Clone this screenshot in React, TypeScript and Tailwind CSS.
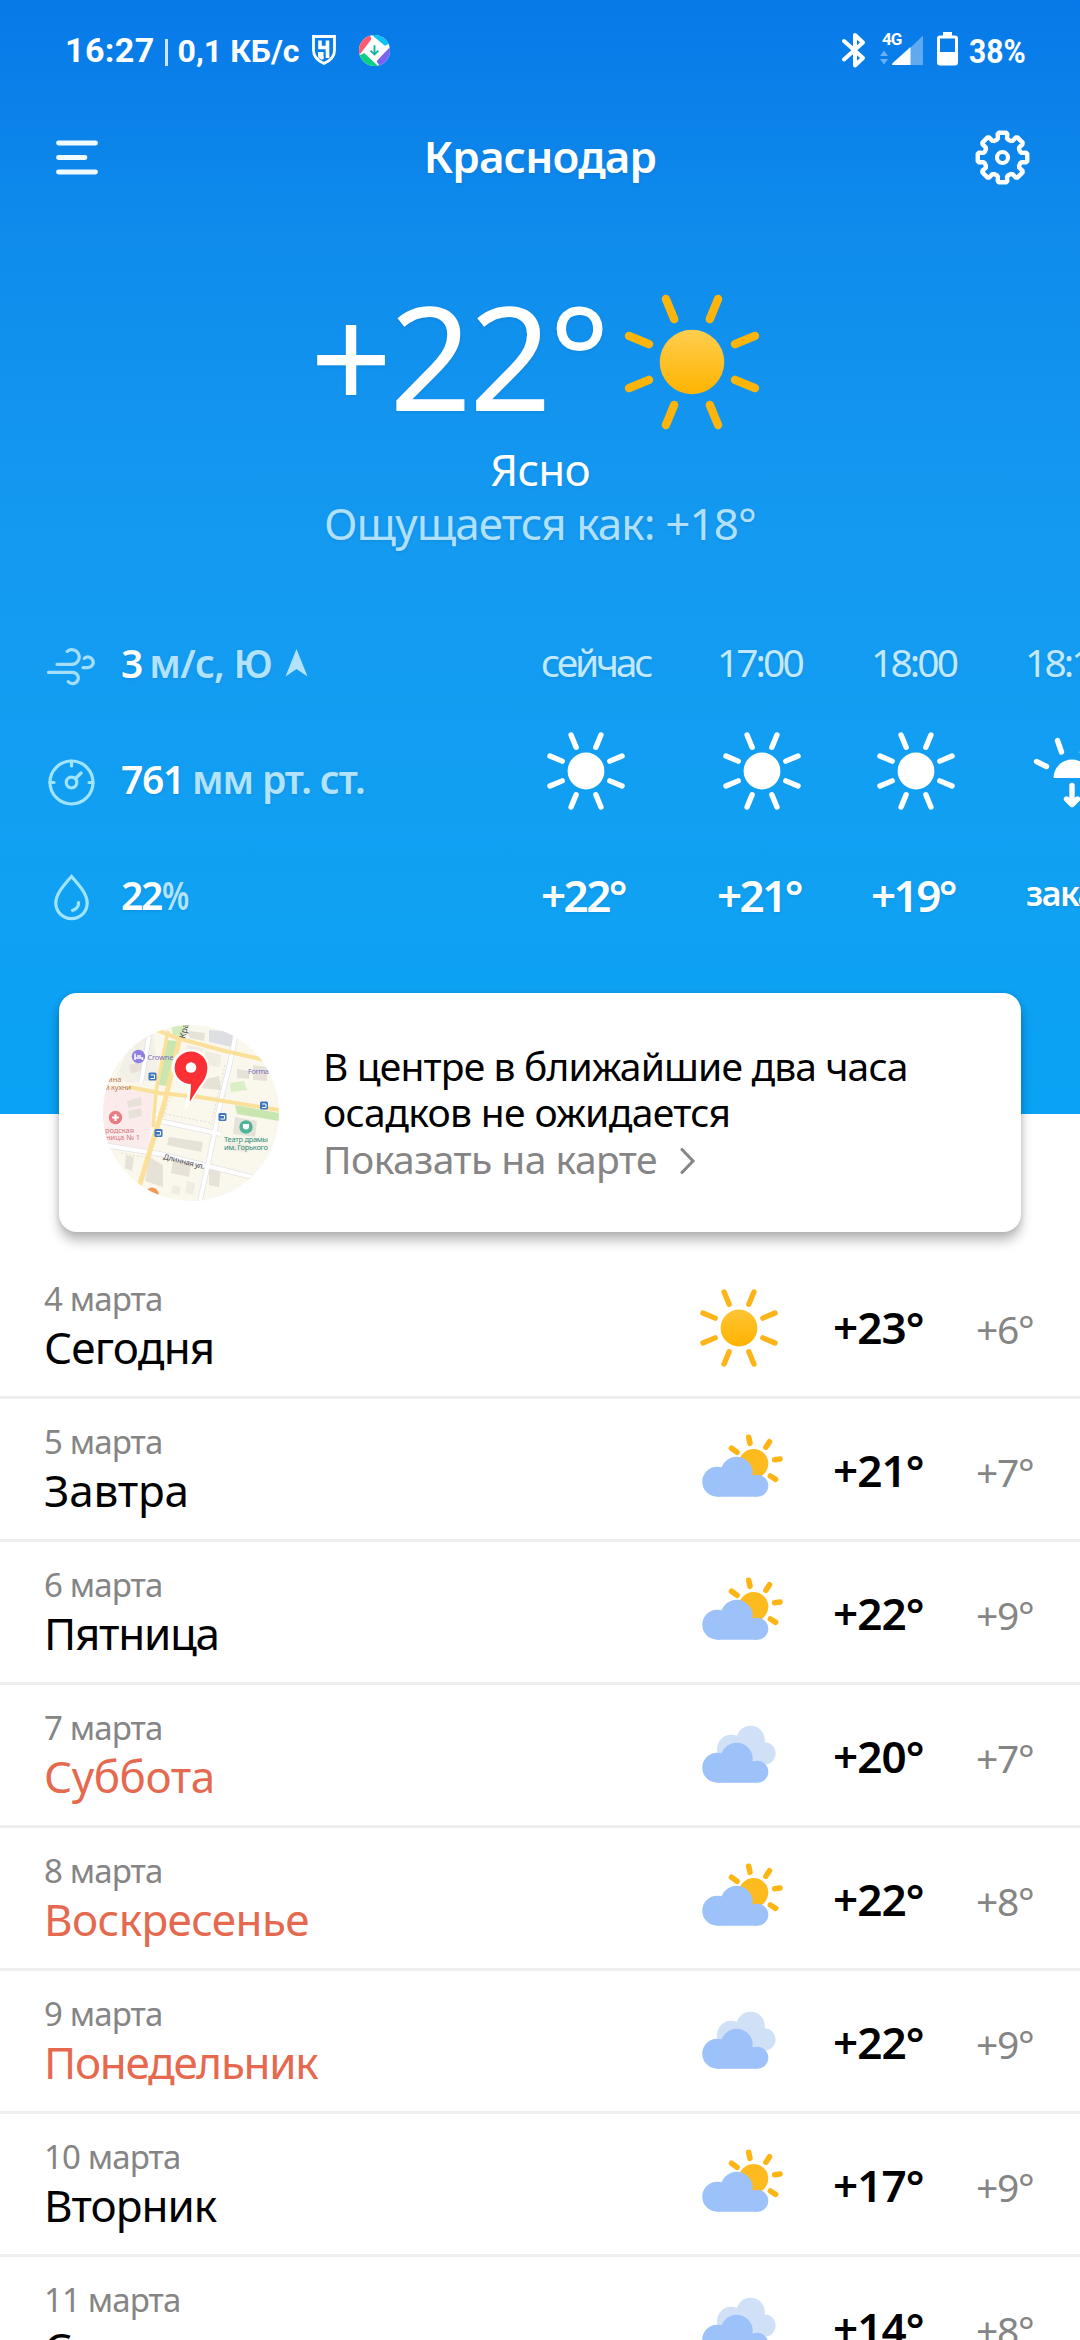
import React from "react";

const days = [
  { date: "4 марта", name: "Сегодня", icon: "sun", max: "+23°", min: "+6°", tracking: "tracking-[-0.8px]" },
  { date: "5 марта", name: "Завтра", icon: "partly", max: "+21°", min: "+7°", tracking: "tracking-[-0.2px]" },
  { date: "6 марта", name: "Пятница", icon: "partly", max: "+22°", min: "+9°", tracking: "tracking-[-1.3px]" },
  { date: "7 марта", name: "Суббота", icon: "cloudy", max: "+20°", min: "+7°", tracking: "tracking-[-0.4px]", off: true },
  { date: "8 марта", name: "Воскресенье", icon: "partly", max: "+22°", min: "+8°", tracking: "tracking-[-0.6px]", off: true },
  { date: "9 марта", name: "Понедельник", icon: "cloudy", max: "+22°", min: "+9°", tracking: "tracking-[-1.3px]", off: true },
  { date: "10 марта", name: "Вторник", icon: "partly", max: "+17°", min: "+9°", tracking: "tracking-[-1px]" },
  { date: "11 марта", name: "Среда", icon: "cloudy", max: "+14°", min: "+8°", tracking: "tracking-[-0.4px]" },
];

const hours = [
  { time: "сейчас", temp: "+22°", width: "w-[176px]", tracking: "tracking-[-3.2px]" },
  { time: "17:00", temp: "+21°", width: "w-[154px]", tracking: "tracking-[-3px]" },
  { time: "18:00", temp: "+19°", width: "w-[154px]", tracking: "tracking-[-2.9px]" },
];

const rayAngles = [22.5, 67.5, 112.5, 157.5, 202.5, 247.5, 292.5, 337.5];

function BigSun() {
  return (
    <svg className="size-[144px]" viewBox="0 0 144 144">
      <defs>
        <linearGradient id="bigSun" x1="0" y1="0" x2="0" y2="1">
          <stop offset="0" stopColor="#ffce4f" />
          <stop offset="1" stopColor="#ffb300" />
        </linearGradient>
      </defs>
      <circle cx="72" cy="72" r="32.3" fill="url(#bigSun)" />
      {rayAngles.map((a) => (
        <line key={a} x1="72" y1="25.5" x2="72" y2="3.8" stroke="#fdb50b" strokeWidth="8.4" strokeLinecap="round" transform={`rotate(${a} 72 72)`} />
      ))}
    </svg>
  );
}

function SmallSun({ color, fill }: any) {
  return (
    <svg className="size-[90px]" viewBox="0 0 90 90">
      <defs>
        <linearGradient id="smallSun" x1="0" y1="0" x2="0" y2="1">
          <stop offset="0" stopColor="#ffc535" />
          <stop offset="1" stopColor="#ffb300" />
        </linearGradient>
      </defs>
      <circle cx="45" cy="45" r="18.4" fill={fill} />
      {rayAngles.map((a) => (
        <line key={a} x1="45" y1="19.2" x2="45" y2="6" stroke={color} strokeWidth="5.4" strokeLinecap="round" transform={`rotate(${a} 45 45)`} />
      ))}
    </svg>
  );
}

function Cloud() {
  return (
    <g fill="#9cc2f9">
      <circle cx="23.3" cy="55.7" r="15" />
      <circle cx="42.7" cy="46.7" r="16" />
      <circle cx="63.3" cy="59.7" r="11" />
      <path d="M23.3 46h32l8 8v16.7h-40z" />
    </g>
  );
}

function PartlyCloudy() {
  return (
    <svg className="size-[90px]" viewBox="0 0 90 90">
      <circle cx="59.6" cy="37.6" r="14.7" fill="#febb1f" />
      <path
        d="M37.5 22.3l5.5 4M54.7 11.3l1.3 6M75.5 15.8l-3.6 5.4M86 33l-5.4.8M76.4 50l5.2 3.3"
        stroke="#fdb515"
        strokeWidth="5.6"
        strokeLinecap="round"
        fill="none"
      />
      <Cloud />
    </svg>
  );
}

function Cloudy() {
  return (
    <svg className="size-[90px]" viewBox="0 0 90 90">
      <g fill="#d0e1f7">
        <circle cx="37.2" cy="37" r="14.2" />
        <circle cx="56.6" cy="28" r="14.3" />
        <circle cx="70.3" cy="41.5" r="11.3" />
        <path d="M37 30h25l8 6v16.8H37z" />
      </g>
      <Cloud />
    </svg>
  );
}

function DayIcon({ name }: any) {
  if (name === "sun") return <SmallSun color="#fbb419" fill="url(#smallSun)" />;
  if (name === "partly") return <PartlyCloudy />;
  return <Cloudy />;
}

// outline of a cog with eight teeth
function gearPath() {
  const pts: string[] = [];
  for (let i = 0; i < 8; i++) {
    [[-18, 18.6], [-13.5, 19.6], [-11.5, 24], [-8.5, 25], [8.5, 25], [11.5, 24], [13.5, 19.6], [18, 18.6]].forEach(([da, r]) => {
      const a = ((i * 45 + da - 90) * Math.PI) / 180;
      pts.push(`${(27.5 + r * Math.cos(a)).toFixed(2)} ${(27.5 + r * Math.sin(a)).toFixed(2)}`);
    });
  }
  return "M" + pts.join("L") + "Z";
}

function StatusBar() {
  return (
    <div className="flex h-[100px] items-center pl-[65px] pr-[54px] font-['Roboto',sans-serif] font-bold text-white">
      <span className="text-[34px] tracking-[0.4px]">16:27</span>
      <span className="ml-[10px] mt-[4px] h-[27px] w-[3px] bg-white/80" />
      <span className="ml-[10px] mt-[1px] text-[32px]">0,1 КБ/с</span>
      <svg className="ml-[12px] h-[32px] w-[26px]" viewBox="0 0 26 32">
        <path d="M2.5 2.5h21v14c0 6-4 10-10.5 13C6.5 26.5 2.5 22.5 2.5 16.5z" fill="none" stroke="#fff" strokeWidth="2.8" />
        {/* angular mark inside the shield */}
        <path d="M9 6.5v7h7.500M16.5 6.500V24M9 18.500v4l3 2" fill="none" stroke="#fff" strokeWidth="3.6" />
        <path d="M7 18h5.500v7.500L7 22z" fill="#fff" />
      </svg>
      <svg className="ml-[22px] size-[31px]" viewBox="0 0 30 30">
        <clipPath id="badge"><circle cx="15" cy="15" r="15" /></clipPath>
        <g clipPath="url(#badge)">
          <rect width="30" height="30" fill="#fff" />
          <path d="M0 0h10.5l1.500 4L1.500 18 0 19z" fill="#ff5a6e" />
          <path d="M12.5 0L25 10.500l4-2 1-8.500z" fill="#0cc2f5" />
          <path d="M30 11.500L17 25.5l3 4.500h10z" fill="#7b61f0" />
          <path d="M5 17.5L18.500 30H0v-10z" fill="#0ccf83" />
        </g>
        <path d="M15 10v8.500M11.2 15.2l3.800 3.700 3.800-3.700" stroke="#0fb5a0" strokeWidth="1.8" fill="none" />
      </svg>
      <div className="ml-auto flex items-center">
        <svg className="h-[38px] w-[26px]" viewBox="0 0 26 38">
          <path d="M3 10l19 17-8 7.500V4l8 7.500L3 28.500" fill="none" stroke="#fff" strokeWidth="4" strokeLinecap="round" strokeLinejoin="round" />
        </svg>
        <svg className="ml-[13px] h-[38px] w-[44px]" viewBox="0 0 44 38">
          <text x="2" y="14" fontSize="17" letterSpacing="-1" fill="#fff" fontFamily="Roboto" fontWeight="700">4G</text>
          <path d="M0 25l4-5.500 4 5.500zM0 28l4 5.500 4-5.500z" fill="#fff" opacity=".4" />
          <path d="M43 4.500V34H12.500z" fill="#fff" opacity=".35" />
          <path d="M30.500 16v18h-17q-2.500 0-.8-2z" fill="#fff" />
        </svg>
        <svg className="ml-[12px] h-[38px] w-[23px]" viewBox="0 0 23 38">
          <path d="M7 1h9v4H7z" fill="#fff" />
          <rect x="2.5" y="6" width="18" height="27" rx="1.5" fill="none" stroke="#fff" strokeWidth="3" />
          <path d="M2 21h19v12H2z" fill="#fff" />
        </svg>
        <span className="ml-[10px] mt-[2px] w-[57px] origin-left scale-x-[.885] text-[34px]">38%</span>
      </div>
    </div>
  );
}

function TopBar() {
  return (
    <div className="flex h-[114px] items-center justify-between px-[50px] text-white">
      <svg className="size-[55px]" viewBox="0 0 55 55">
        <path d="M8.500 13h37M8.500 27.500h26.500M8.500 42h37" stroke="#eefcff" strokeWidth="4.800" strokeLinecap="round" />
      </svg>
      <h1 className="pb-[2px] text-[44px] leading-[54px] font-semibold tracking-[-0.85px]">Краснодар</h1>
      <svg className="size-[55px]" viewBox="0 0 55 55">
        <path d={gearPath()} fill="none" stroke="#fff" strokeWidth="4.400" strokeLinejoin="round" />
        <circle cx="27.500" cy="27.500" r="5.500" fill="none" stroke="#fff" strokeWidth="4.200" />
      </svg>
    </div>
  );
}

function Details() {
  return (
    <div className="w-[540px] pl-[47px] text-[39px] leading-[54px] font-semibold text-[#b3e3fc]">
      <div className="flex h-[116px] items-center">
        <svg className="mt-[6px] size-[49px]" viewBox="0 0 49 49">
          <path
            d="M10 22.300h14.500a7.300 7.300 0 1 0-4.300-12.900M36 25.600h5a5.300 5.300 0 1 0-3.700-9.200M1.500 30.300h23.800a5.700 5.700 0 1 1-4 9.500"
            fill="none"
            stroke="#a5defb"
            strokeWidth="3.200"
            strokeLinecap="round"
          />
        </svg>
        <span className="ml-[25px] text-white">3</span>
        <span className="ml-[6px] tracking-[-0.8px]">м/с, Ю</span>
        <svg className="ml-[13px] h-[28px] w-[23px]" viewBox="0 0 23 28">
          <path d="M11.500 0L22.500 27.500l-11-7.500L.5 27.500z" fill="#b3e3fc" />
        </svg>
      </div>
      <div className="flex h-[116px] items-center">
        <svg className="mt-[6px] size-[49px]" viewBox="0 0 49 49" fill="none" stroke="#a0e4fd">
          <circle cx="24.500" cy="24.500" r="21.500" strokeWidth="3.200" />
          <circle cx="24.500" cy="24.500" r="5.300" strokeWidth="3.200" />
          <path d="M28.500 20.500l5.500-5.500M24.500 3v5M3 24.500h4M42 24.500h4" strokeWidth="3.200" strokeLinecap="round" />
        </svg>
        <span className="ml-[25px] tracking-[-1.3px] text-white">761</span>
        <span className="ml-[8px] tracking-[-1.15px]">мм рт. ст.</span>
      </div>
      <div className="flex h-[116px] items-center">
        <svg className="mt-[4px] size-[49px]" viewBox="0 0 49 49" fill="none" stroke="#a0e4fd" strokeWidth="3.200" strokeLinecap="round">
          <path d="M24.500 3.500C17 12 8.800 21 8.800 30a15.700 15.700 0 0 0 31.400 0c0-9-8.200-18-15.700-26.500z" />
          <path d="M31.500 29.500a7.500 7.500 0 0 1-6 7.800" />
        </svg>
        <span className="ml-[25px] tracking-[-2.3px] text-white">22</span>
        <span className="ml-[1px] inline-block origin-left scale-x-[.8]">%</span>
      </div>
    </div>
  );
}

function Hourly() {
  return (
    <div className="flex flex-1 overflow-hidden">
      {hours.map((h) => (
        <div key={h.time} className={`${h.width} shrink-0`}>
          <p className={`${h.tracking} pl-[1px] pt-[30px] text-[39px] leading-[54px] text-[#c1e8fd]`}>{h.time}</p>
          <div className="mt-[37px] h-[90px] pl-[1px]">
            <SmallSun color="#fff" fill="#fff" />
          </div>
          <p className="mt-[47px] pl-[1px] text-[44px] leading-[64px] font-semibold tracking-[-2.6px] text-white">{h.temp}</p>
        </div>
      ))}
      <div className="w-[154px] shrink-0">
        <p className="pl-[1px] pt-[30px] text-[39px] leading-[54px] tracking-[-2.9px] text-[#c1e8fd]">18:14</p>
        <div className="mt-[37px] h-[90px] pl-[3px]">
          <svg className="size-[90px]" viewBox="0 0 90 90">
            <path d="M26.500 52a18.500 18.500 0 0 1 37 0z" fill="#fff" />
            <path
              d="M30.500 14.500l4 11.500M59.500 14.500l-4 11.500M9.500 35.500l10 5M80.500 35.500l-10 5M45 59.500v18M39.500 73l5.500 5.500 5.500-5.500"
              stroke="#fff"
              strokeWidth="5.400"
              strokeLinecap="round"
              strokeLinejoin="round"
              fill="none"
            />
          </svg>
        </div>
        <p className="mt-[45px] pl-[2px] text-[34px] leading-[64px] font-semibold tracking-[-1.5px] text-white">закат</p>
      </div>
    </div>
  );
}

function MapPreview() {
  return (
    <svg className="mt-[32px] ml-[44px] size-[176px]" viewBox="0 0 176 176" fontFamily="Noto Sans" fontSize="7.500">
      <clipPath id="mapClip"><circle cx="88" cy="88" r="88" /></clipPath>
      <g clipPath="url(#mapClip)">
        <rect width="176" height="176" fill="#faf7ec" />
        <path d="M0 62l50 6-4 56-46-4z" fill="#fbeceb" />
        <path d="M28 14l22-6 6 46-30 4-12-6z" fill="#f3f0e8" />
        {/* parks */}
        <path d="M63 15l12 1-10 45-10-1z" fill="#c9e6b0" />
        <path d="M68 0h16l-4 12-10-2z" fill="#d3ebbd" />
        <path d="M132 80l44 8v8l-42-7z" fill="#c9e6b0" />
        <path d="M127 58l14-2 3 9-16 2z" fill="#d9efc6" />
        {/* buildings */}
        <path d="M106 5l24 2-1 15-23-5z" fill="#dedfe3" />
        <path d="M86 6l16 2-1 8-15-3zM26 40l14-4 2 8-14 5zM24 76l14-4 1 8-14 3zM25 86l13-3 1 8-13 3zM66 112l34 5-2 10-34-7zM46 132l14 8v22l-18-6zM70 136l18 4-2 12-18-4zM106 138l12 4-2 20-10-2zM23 130l8 2-2 14-7-3zM132 92l22 4-2 16-22-3zM150 40l14 2v14l-14-1zM96 56l20-5 2 14-22-2zM134 44l12 2v8l-12-1z" fill="#e6e2d8" />
        <path d="M70 160l8 2-2 8-8-2zM84 156l8 2-2 12-8-2zM126 116l20 4-2 8-20-4zM84 20l16 3-1 9-14-2zM102 26l16 4-1 12-15-2z" fill="#f0ece2" />
        {/* side streets */}
        <g fill="none" stroke="#e3e1e4" strokeWidth="5.500">
          <path d="M133 8l-6 30-9 37-10 50-11 51" />
          <path d="M0 120l57 9 60 15 40 10" />
          <path d="M52 95l66 14M46 12l-8 46" />
        </g>
        <g fill="none" stroke="#fff" strokeWidth="4">
          <path d="M133 8l-6 30-9 37-10 50-11 51" />
          <path d="M0 120l57 9 60 15 40 10" />
          <path d="M52 95l66 14M46 12l-8 46" />
        </g>
        <path d="M58 88l50 10M60 92l8-20M122 40l-14 60M18 128l32 6" stroke="#d6d2cc" strokeWidth=".7" strokeDasharray="2 2" fill="none" />
        {/* avenues */}
        <g fill="none" stroke="#fbe09a" strokeWidth="4">
          <path d="M46 2l28 11 48 13 40 9" />
          <path d="M26 62l30 6 40 4 80 13" />
          <path d="M65 6L53 66l-3 36" strokeWidth="3.500" />
          <path d="M77 12L62 76 36 162" strokeWidth="5" />
        </g>
        {/* places */}
        <circle cx="35.500" cy="31.500" r="6.700" fill="#8f7fe0" />
        <path d="M32 28.500v6.500M32 33h7.500v2M34 31h4" stroke="#fff" strokeWidth="1.500" fill="none" />
        <circle cx="12.500" cy="92.500" r="6.700" fill="#ea7a7f" />
        <path d="M12.500 89v7M9 92.500h7" stroke="#fff" strokeWidth="2.200" />
        <circle cx="143" cy="102" r="6.700" fill="#4fb59a" />
        <path d="M140 99h6v4q-3 3-6 0z" fill="#fff" />
        <circle cx="49" cy="169" r="6.500" fill="#ef9a55" />
        <g fill="#3f77bd">
          <rect x="45.500" y="47.500" width="8" height="8" rx="1.500" />
          <rect x="115.500" y="88" width="8" height="8" rx="1.500" />
          <rect x="157" y="76.500" width="8" height="8" rx="1.500" />
          <rect x="51.500" y="104" width="8" height="8" rx="1.500" />
        </g>
        <path d="M47.500 50h4v3.500h-4M117.500 90.500h4v3.500h-4M159 79h4v3.500h-4M53.500 106.500h4v3.500h-4" stroke="#fff" strokeWidth="1" fill="none" />
        <text x="44.500" y="34.500" textLength="26" fill="#7d6fc4">Crowne</text>
        <text x="145" y="49" textLength="21" fill="#7d6fc4">Forma</text>
        <text x="5" y="56.500" fill="#bd7748">ина</text>
        <text x="2" y="65" textLength="26" fill="#bd7748">й кухни</text>
        <text x="2" y="107.500" textLength="29" fill="#d5737b">родская</text>
        <text x="3" y="115" textLength="34" fill="#d5737b">ница № 1</text>
        <text x="121" y="117" textLength="44" fill="#2f8c78">Театр драмы</text>
        <text x="121" y="125" textLength="44" fill="#2f8c78">им. Горького</text>
        <text x="60" y="134" textLength="42" fill="#444" transform="rotate(14 60 134)">Длинная ул.</text>
        <text x="82" y="14" fill="#444" fontSize="8.500" transform="rotate(-76 82 14)">Кра</text>
        {/* pin */}
        <path d="M88 24.500a18 18 0 0 1 18 18c0 10-4 15-9 22-4 6-9 12-15 21-.5-7 3-14 3.500-24.600A18 18 0 0 1 88 24.500z" fill="#fff" />
        <path d="M88 26.500a16.300 16.300 0 0 1 16.300 16.300c0 9-4 13.500-8.500 19.500-3 4.500-5.500 9-9 14.500 0-6 1.500-12 1-17.700A16.300 16.300 0 0 1 88 26.500z" fill="#fb3034" />
        <circle cx="88" cy="42.500" r="5.300" fill="#fff" />
      </g>
    </svg>
  );
}

export default function App() {
  return (
    <div className="h-[2340px] w-[1080px] overflow-hidden bg-white font-['Noto_Sans',sans-serif]">
      <header className="h-[1114px] bg-[linear-gradient(180deg,#0779e8_0px,#0f8cec_240px,#149af1_540px,#10a1f3_900px,#09a2f4_1114px)]">
        <StatusBar />
        <div className="[text-shadow:0_1px_3px_rgba(0,60,120,0.15)]">
          <TopBar />
          <div className="mt-[76px] flex h-[144px] pl-[310px]">
            <span className="w-[310px] text-[144px] leading-[131px] tracking-[-2.8px] text-white">+22°</span>
            <BigSun />
          </div>
          <p className="mt-[8px] text-center text-[44px] leading-[54px] tracking-[-0.9px] text-white">Ясно</p>
          <p className="text-center text-[44px] leading-[54px] tracking-[-0.9px] text-[#b1e0fc]">Ощущается как: +18°</p>
          <div className="mt-[55px] flex">
            <Details />
            <Hourly />
          </div>
        </div>
      </header>

      <div className="relative mx-[59px] -mt-[121px] flex h-[239px] rounded-[18px] bg-white shadow-[0_9px_12px_rgba(0,0,0,0.25),0_1px_6px_rgba(0,0,0,0.12)]">
        <MapPreview />
        <div className="ml-[44px] pt-[50px] text-[39px] leading-[46px] text-black">
          <p className="tracking-[-0.85px]">В центре в ближайшие два часа</p>
          <p className="tracking-[-0.65px]">осадков не ожидается</p>
          <p className="mt-[1px] flex items-center tracking-[-0.54px] text-[#858585]">
            Показать на карте
            <svg className="ml-[23px] mt-[4px] h-[26px] w-[16px]" viewBox="0 0 16 26">
              <path d="M2 1.500l11 11.500L2 24.500" fill="none" stroke="#858585" strokeWidth="3" strokeLinecap="round" />
            </svg>
          </p>
        </div>
      </div>

      <ul className="mt-[24px]">
        {days.map((d) => (
          <li key={d.date} className="flex h-[143px] border-b-[3px] border-[#eee]">
            <div className="w-[694px] pl-[44px] pt-[23px]">
              <p className="text-[33px] leading-[40px] tracking-[-0.87px] text-[#858585]">{d.date}</p>
              <p className={`${d.tracking} text-[44px] leading-[57px] ${d.off ? "text-[#e5694f]" : "text-black"}`}>{d.name}</p>
            </div>
            <div className="mt-[27px]">
              <DayIcon name={d.icon} />
            </div>
            <span className="ml-[49px] w-[143px] text-[44px] leading-[142px] font-semibold tracking-[-0.9px] text-black">{d.max}</span>
            <span className="text-[39px] leading-[146px] tracking-[-1.3px] text-[#858585]">{d.min}</span>
          </li>
        ))}
      </ul>
    </div>
  );
}
